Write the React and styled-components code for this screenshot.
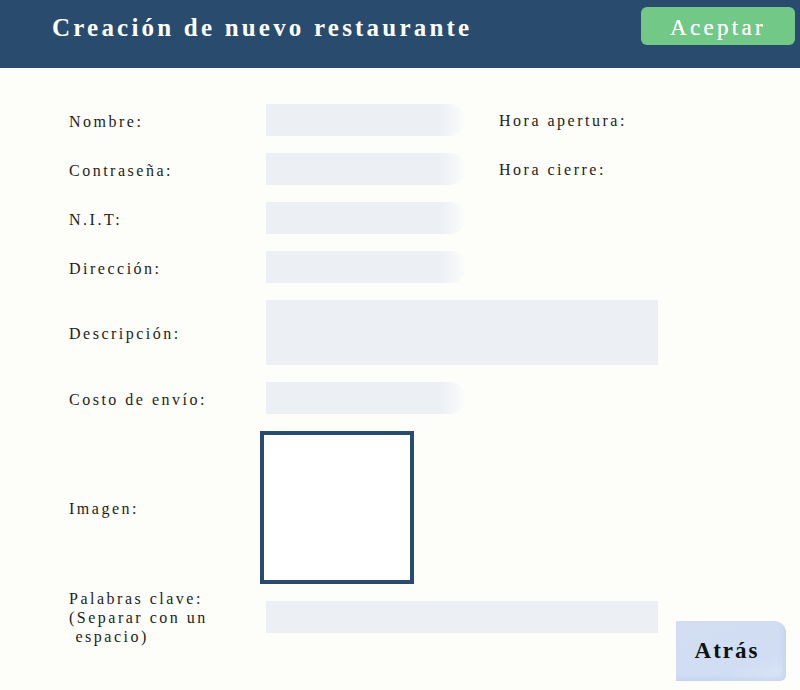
import React from "react";
import styled, { createGlobalStyle } from "styled-components";

const Global = createGlobalStyle`
  html, body { margin: 0; padding: 0; }
  body {
    background: #fdfdf9;
    font-family: "Liberation Serif", "DejaVu Serif", serif;
    color: #1c1c1c;
  }
`;

const Page = styled.div`
  width: 800px;
  min-height: 690px;
  display: flex;
  flex-direction: column;
  background: #fdfdf9;
`;

const Header = styled.header`
  height: 68px;
  box-sizing: border-box;
  background: #284b6e;
  display: flex;
  align-items: flex-start;
  justify-content: space-between;
  padding: 7px 5px 0 52px;
`;

const Title = styled.h1`
  margin: 0;
  height: 38px;
  padding-top: 3px;
  box-sizing: border-box;
  display: flex;
  align-items: center;
  color: #ffffff;
  font-size: 25px;
  font-weight: 700;
  letter-spacing: 3.2px;
`;

const AcceptButton = styled.button`
  width: 154px;
  height: 38px;
  padding: 3px 0 0;
  border: none;
  border-radius: 6px;
  background: #72c987;
  color: #ffffff;
  font-family: inherit;
  font-size: 23px;
  letter-spacing: 3.3px;
  text-shadow: 0 0 0.4px #ffffff;
  cursor: pointer;
`;

const Main = styled.main`
  flex: 1;
  display: flex;
  align-items: flex-end;
  padding: 36px 14px 9px 69px;
`;

const Form = styled.div`
  align-self: flex-start;
  display: grid;
  grid-template-columns: 197px 233px 160px;
  grid-auto-rows: auto;
  row-gap: 17px;
  align-items: center;
`;

const Label = styled.label`
  grid-column: 1;
  height: ${(p) => (p.$tall ? "32px" : "auto")};
  padding-top: ${(p) => (p.$tall ? "0" : "2px")};
  display: flex;
  align-items: center;
  font-size: 16px;
  line-height: 19px;
  letter-spacing: 2.5px;
  white-space: nowrap;
`;

const SideLabel = styled.label`
  grid-column: 3;
  padding-top: 2px;
  font-size: 16px;
  letter-spacing: 2.5px;
  white-space: nowrap;
`;

const TextInput = styled.div`
  grid-column: 2;
  width: 200px;
  height: 32px;
  background: linear-gradient(
    90deg,
    #eceff3 0,
    #eceff3 calc(100% - 28px),
    #f7f8fa calc(100% - 8px),
    #fdfdf9 100%
  );
  border-radius: 0 16px 16px 0 / 0 50% 50% 0;
`;

const WideInput = styled.div`
  grid-column: 2 / span 2;
  width: 392px;
  height: ${(p) => p.$h || 32}px;
  background: #eceff3;
`;

const ImageBox = styled.div`
  grid-column: 2;
  width: 154px;
  height: 153px;
  box-sizing: border-box;
  margin-left: -6px;
  background: #ffffff;
  border: 4px solid #284b6e;
`;

const BackButton = styled.button`
  margin-left: auto;
  width: 110px;
  height: 60px;
  padding: 0 8px 0 0;
  border: none;
  border-radius: 0 12px 6px 0;
  background: linear-gradient(160deg, #d3def2 0%, #d0ddf3 70%, #dce6f7 100%);
  box-shadow: inset -3px -3px 4px rgba(190, 205, 235, 0.6);
  color: #111111;
  font-family: inherit;
  font-size: 23px;
  font-weight: 700;
  letter-spacing: 2px;
  cursor: pointer;
`;

export default function App() {
  return (
    <>
      <Global />
      <Page>
        <Header>
          <Title>Creación de nuevo restaurante</Title>
          <AcceptButton>Aceptar</AcceptButton>
        </Header>
        <Main>
          <Form>
            <Label>Nombre:</Label>
            <TextInput />
            <SideLabel>Hora apertura:</SideLabel>

            <Label>Contraseña:</Label>
            <TextInput />
            <SideLabel>Hora cierre:</SideLabel>

            <Label>N.I.T:</Label>
            <TextInput />

            <Label>Dirección:</Label>
            <TextInput />

            <Label>Descripción:</Label>
            <WideInput $h={65} />

            <Label>Costo de envío:</Label>
            <TextInput />

            <Label>Imagen:</Label>
            <ImageBox />

            <Label $tall>
              <span>
                Palabras clave:
                <br />
                (Separar con un
                <br />
                {"\u00a0"}espacio)
              </span>
            </Label>
            <WideInput />
          </Form>
          <BackButton>Atrás</BackButton>
        </Main>
      </Page>
    </>
  );
}
